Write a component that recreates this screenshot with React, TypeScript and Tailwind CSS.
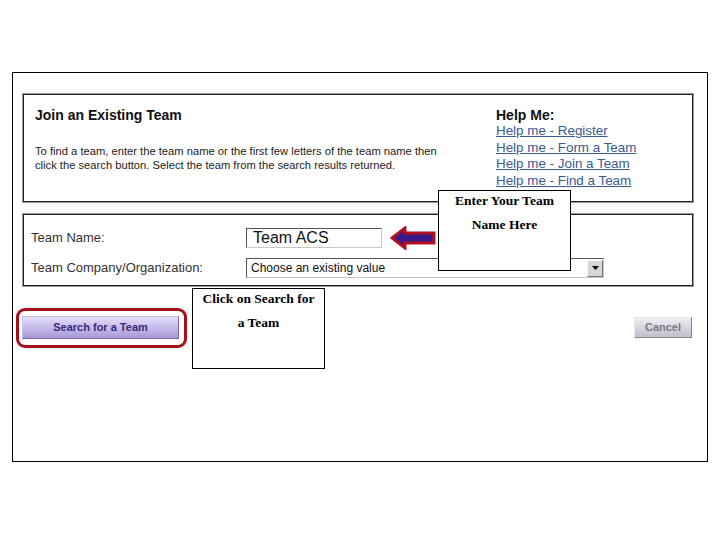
// @ts-nocheck
const sans = { fontFamily: '"Liberation Sans", Arial, sans-serif' };

const helpLinks = [
  "Help me - Register",
  "Help me - Form a Team",
  "Help me - Join a Team",
  "Help me - Find a Team",
];

const Arrow = () => (
  <svg width="46" height="24" viewBox="0 0 46 24" className="ml-[8px] shrink-0">
    <path
      d="M2 12 L15 2 L15 7 L44 7 L44 17 L15 17 L15 22 Z"
      fill="#3a1a8a"
      stroke="#b01020"
      strokeWidth="3"
      strokeLinejoin="miter"
    />
  </svg>
);

const Callout = ({ lines, className }) => (
  <div
    className={`absolute flex w-[133px] h-[81px] flex-col gap-[4px] border border-black bg-white text-center text-[13.5px] font-bold leading-[20px] text-black ${className}`}
    style={{ fontFamily: '"Liberation Serif", "Times New Roman", serif' }}
  >
    {lines.map((l, i) => (
      <div key={i}>{l}</div>
    ))}
  </div>
);

export default function App() {
  return (
    <div className="w-[720px] h-[540px] bg-white pt-[72px] pl-[12px]" style={sans}>
      <div className="relative w-[696px] h-[390px] border border-black">
        {/* Intro panel */}
        <div className="ml-[9px] mt-[20px] w-[672px] h-[110px] border border-[#9a9aa2]">
          <div className="flex h-full border border-[#222]">
            <div className="w-[460px] pl-[11px] pt-[11px]">
              <h2 className="text-[14px] font-bold leading-[18px] text-[#111]">Join an Existing Team</h2>
              <p className="mt-[20px] text-[11.2px] leading-[14px] text-[#222]">
                To find a team, enter the team name or the first few letters of the team name then
                <br />
                click the search button. Select the team from the search results returned.
              </p>
            </div>
            <div className="pl-[12px] pt-[11px]">
              <div className="text-[14px] font-bold leading-[18px] text-[#111]">Help Me:</div>
              <ul className="-mt-[1px] text-[13.4px] leading-[16.7px]">
                {helpLinks.map((t) => (
                  <li key={t} className="h-[16.7px]">
                    <a href="#" className="text-[#3a5a92] underline">
                      {t}
                    </a>
                  </li>
                ))}
              </ul>
            </div>
          </div>
        </div>

        {/* Search form panel */}
        <div className="ml-[9px] mt-[10px] w-[672px] h-[74px] border border-[#9a9aa2]">
          <div className="h-full border border-[#222] pl-[7px] pt-[11px]">
            <div className="flex items-center">
              <span className="w-[215px] text-[13px] text-[#333]">Team Name:</span>
              <div className="flex h-[20px] w-[136px] items-end border border-[#c8c8c8] border-t-[#555] border-l-[#555] pl-[6px] text-[16px] leading-[18px] text-[#111]">
                Team ACS
              </div>
              <Arrow />
            </div>
            <div className="mt-[8px] flex items-center">
              <span className="w-[215px] text-[13px] text-[#333]">Team Company/Organization:</span>
              <div className="flex h-[20px] w-[358px] items-center justify-between border border-[#c8c8c8] border-t-[#555] border-l-[#555] pl-[4px] text-[12px] text-[#111]">
                <span>Choose an existing value</span>
                <span className="flex h-[17px] w-[16px] items-center justify-center border border-[#f4f4f4] border-b-[#777] border-r-[#777] bg-[#d8d6d0]">
                  <svg width="7" height="4" viewBox="0 0 7 4">
                    <path d="M0 0 L7 0 L3.5 4 Z" fill="#000" />
                  </svg>
                </span>
              </div>
            </div>
          </div>
        </div>

        {/* Buttons */}
        <div className="mt-[21px] flex items-start justify-between pr-[15px]">
          <div className="ml-[3px] h-[40px] w-[171px] rounded-[9px] border-[3px] border-[#a81018] pl-[3px] pt-[3px]">
            <button className="h-[23px] w-[157px] border border-[#c8c0e4] border-b-[#7868a8] border-r-[#7868a8] bg-gradient-to-b from-[#e4defa] to-[#a898d8] text-[11px] font-bold leading-[20px] text-[#3a2a78]">
              Search for a Team
            </button>
          </div>
          <button className="mt-[9px] h-[21px] w-[58px] border border-[#e4e4ec] border-b-[#888] border-r-[#888] bg-gradient-to-b from-[#eeeef4] to-[#c0c0cc] text-[11px] font-bold text-[#7a7a82]">
            Cancel
          </button>
        </div>

        <Callout lines={["Enter Your Team", "Name Here"]} className="left-[425px] top-[117px]" />
        <Callout lines={["Click on Search for", "a Team"]} className="left-[179px] top-[215px]" />
      </div>
    </div>
  );
}
